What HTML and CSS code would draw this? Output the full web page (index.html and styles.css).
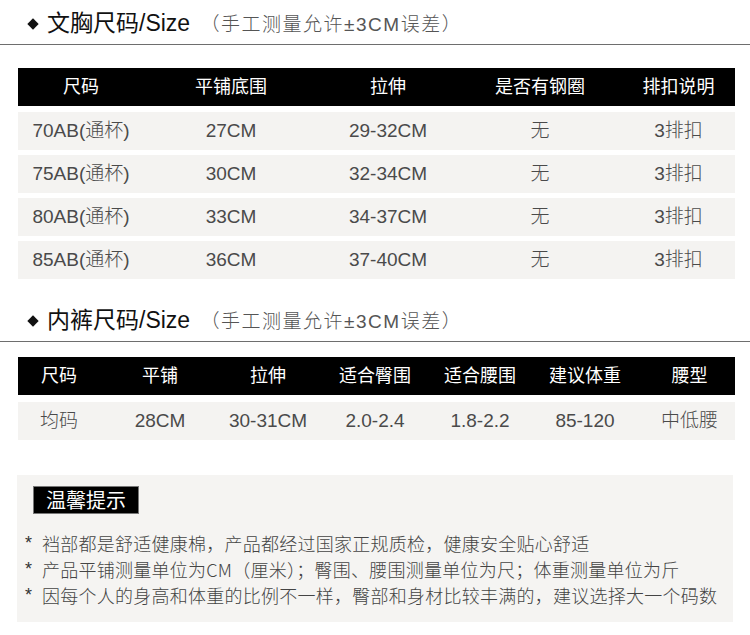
FILE: index.html
```html
<!DOCTYPE html>
<html lang="zh-CN">
<head>
<meta charset="utf-8">
<title>尺码表</title>
<link rel="stylesheet" href="styles.css">
</head>
<body>
<section class="sec sec-bra">
  <div class="sec-title">
    <span class="diamond"></span><span class="title-main">文胸尺码/Size</span> <span class="title-sub">（手工测量允许±3CM误差）</span>
  </div>
  <div class="table table-bra">
    <div class="row head">
      <span>尺码</span><span>平铺底围</span><span>拉伸</span><span>是否有钢圈</span><span>排扣说明</span>
    </div>
    <div class="row body">
      <span>70AB(通杯)</span><span>27CM</span><span>29-32CM</span><span>无</span><span>3排扣</span>
    </div>
    <div class="row body">
      <span>75AB(通杯)</span><span>30CM</span><span>32-34CM</span><span>无</span><span>3排扣</span>
    </div>
    <div class="row body">
      <span>80AB(通杯)</span><span>33CM</span><span>34-37CM</span><span>无</span><span>3排扣</span>
    </div>
    <div class="row body">
      <span>85AB(通杯)</span><span>36CM</span><span>37-40CM</span><span>无</span><span>3排扣</span>
    </div>
  </div>
</section>

<section class="sec sec-pants">
  <div class="sec-title">
    <span class="diamond"></span><span class="title-main">内裤尺码/Size</span> <span class="title-sub">（手工测量允许±3CM误差）</span>
  </div>
  <div class="table table-pants">
    <div class="row head">
      <span>尺码</span><span>平铺</span><span>拉伸</span><span>适合臀围</span><span>适合腰围</span><span>建议体重</span><span>腰型</span>
    </div>
    <div class="row body">
      <span>均码</span><span>28CM</span><span>30-31CM</span><span>2.0-2.4</span><span>1.8-2.2</span><span>85-120</span><span>中低腰</span>
    </div>
  </div>
</section>

<section class="tips">
  <div class="tips-label">温馨提示</div>
  <ul class="tips-list">
    <li>裆部都是舒适健康棉，产品都经过国家正规质检，健康安全贴心舒适</li>
    <li>产品平铺测量单位为CM（厘米）；臀围、腰围测量单位为尺；体重测量单位为斤</li>
    <li>因每个人的身高和体重的比例不一样，臀部和身材比较丰满的，建议选择大一个码数</li>
  </ul>
</section>
</body>
</html>
```

FILE: styles.css
```css
* { box-sizing: border-box; }

html, body {
  margin: 0;
  padding: 0;
  background: #ffffff;
}

body {
  width: 750px;
  font-family: "Liberation Sans", "Noto Sans CJK SC", sans-serif;
  color: #333;
}

.sec-title {
  height: 45px;
  padding: 10px 0 0 29px;
  border-bottom: 1px solid #6e6e6e;
  line-height: 26px;
  white-space: nowrap;
}

.diamond {
  display: inline-block;
  width: 8px;
  height: 8px;
  background: #111;
  transform: rotate(45deg);
  margin-right: 10px;
  vertical-align: 3px;
}

.title-main {
  font-size: 23px;
  color: #111;
}

.title-sub {
  font-size: 19px;
  color: #555;
  margin-left: 6px;
  font-weight: 300;
  letter-spacing: 1.5px;
}

.table {
  margin: 23px 15px 0 18px;
  display: flex;
  flex-direction: column;
  gap: 5px;
}

.row {
  display: grid;
  align-items: center;
  text-align: center;
}

.row span {
  line-height: 22px;
}

.table-bra .row {
  grid-template-columns: 126px 174px 140px 164px 113px;
}

.table-pants .row {
  grid-template-columns: 82px 120px 96px 118px 92px 118px 91px;
}

.row.head {
  height: 38px;
  background: #000;
  color: #fff;
  font-size: 18px;
  margin-bottom: 1px;
}

.row.body {
  height: 38px;
  background: #f4f3f1;
  color: #4a4a4a;
  font-size: 19px;
  font-weight: 300;
}

.sec-pants {
  margin-top: 18px;
}

.table-pants {
  margin-top: 15px;
  gap: 6px;
}

.tips {
  margin: 35px 17px 0 17px;
  background: #f5f4f2;
  padding: 11px 0 14px 16px;
}

.tips-label {
  display: inline-block;
  width: 106px;
  height: 28px;
  line-height: 26px;
  background: #000;
  border: 1px solid #777;
  color: #fff;
  font-size: 20px;
  text-align: center;
  font-family: "Noto Sans CJK SC", sans-serif;
}

.tips-list {
  list-style: none;
  margin: 16px 0 0 0;
  padding: 0;
  font-size: 18px;
  line-height: 26px;
  color: #444;
  font-family: "Noto Sans CJK SC", sans-serif;
  font-weight: 300;
  letter-spacing: 0.25px;
}

.tips-list li {
  display: flex;
  margin-left: -8px;
}

.tips-list li::before {
  content: "*";
  width: 17px;
  flex: none;
  font-family: "Liberation Sans", sans-serif;
  font-size: 18px;
  font-weight: 400;
  color: #333;
}
```
